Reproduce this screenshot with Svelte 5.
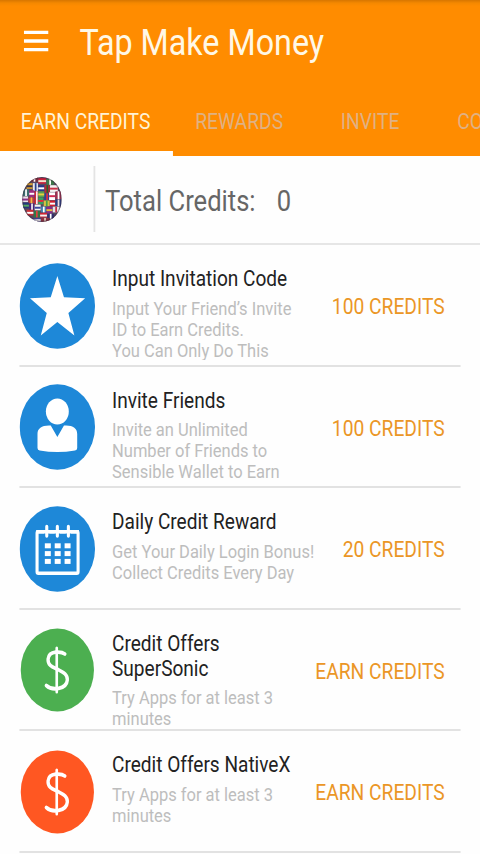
<script>
	/**
	 * @typedef {{title:string,text:string[],action:string,icon:string,color:string}} offer
	 */

	const tabs = [
		{ label: 'EARN CREDITS', width: 196 },
		{ label: 'REWARDS', width: 152 },
		{ label: 'INVITE', width: 145 },
		{ label: 'CONTACT', width: 150 }
	];
	let activeTab = $state(0);
	let credits = $state(0);

	/** @type {offer[]} */
	const offers = [
		{
			title: 'Input Invitation Code',
			text: ['Input Your Friend’s Invite', 'ID to Earn Credits.', 'You Can Only Do This'],
			action: '100 CREDITS',
			icon: 'star',
			color: '#1e88d8'
		},
		{
			title: 'Invite Friends',
			text: ['Invite an Unlimited', 'Number of Friends to', 'Sensible Wallet to Earn'],
			action: '100 CREDITS',
			icon: 'person',
			color: '#1e88d8'
		},
		{
			title: 'Daily Credit Reward',
			text: ['Get Your Daily Login Bonus!', 'Collect Credits Every Day'],
			action: '20 CREDITS',
			icon: 'calendar',
			color: '#1e88d8'
		},
		{
			title: 'Credit Offers SuperSonic',
			text: ['Try Apps for at least 3', 'minutes'],
			action: 'EARN CREDITS',
			icon: 'dollar',
			color: '#4caf50'
		},
		{
			title: 'Credit Offers NativeX',
			text: ['Try Apps for at least 3', 'minutes'],
			action: 'EARN CREDITS',
			icon: 'dollar',
			color: '#ff5722'
		}
	];

	// flag patches on the globe: x, y, width, height, base colour, stripe colour
	const flags = [
		[10, 0, 8, 5, '#7b2d3c', '#fff'],
		[18, 1, 9, 6, '#c8203c', '#f2e6d0'],
		[27, 2, 9, 6, '#3c7a4a', '#fff'],
		[5, 6, 7, 6, '#d8a030', '#303050'],
		[12, 6, 6, 8, '#e8e8f0', '#28408c'],
		[18, 8, 7, 6, '#28388c', '#fff'],
		[25, 8, 6, 8, '#b82838', '#28602c'],
		[31, 8, 9, 7, '#f4f4f4', '#c83048'],
		[1, 12, 7, 7, '#3c6e70', '#fff'],
		[8, 13, 6, 7, '#9c2c80', '#fff'],
		[14, 14, 4, 13, '#d42030', '#f4f0f0'],
		[18, 14, 7, 6, '#58a050', '#e8d040'],
		[25, 16, 5, 7, '#28409c', '#e03038'],
		[30, 15, 7, 8, '#fff', '#d02850'],
		[37, 14, 7, 8, '#a03050', '#fff'],
		[0, 19, 7, 6, '#e8e0e8', '#8a3088'],
		[7, 20, 7, 6, '#c03844', '#f0c040'],
		[18, 20, 6, 7, '#38a060', '#e82838'],
		[24, 23, 7, 6, '#d8c040', '#48a048'],
		[31, 23, 6, 6, '#d02030', '#fff'],
		[37, 22, 7, 7, '#2c3c80', '#f0e0e0'],
		[1, 25, 7, 6, '#24387c', '#58a860'],
		[8, 26, 6, 7, '#48207c', '#f0f0f0'],
		[14, 27, 7, 6, '#f4f4f0', '#3c48a0'],
		[21, 29, 6, 6, '#4080b0', '#fff'],
		[27, 29, 7, 7, '#842c8c', '#e8b840'],
		[34, 29, 8, 6, '#e4e4e8', '#c02840'],
		[5, 32, 8, 6, '#c83038', '#fff'],
		[13, 33, 7, 7, '#307844', '#e04040'],
		[20, 35, 8, 5, '#d02434', '#f4f4f4'],
		[28, 36, 8, 6, '#303070', '#fff'],
		[12, 40, 9, 4, '#404090', '#fff'],
		[21, 40, 10, 4, '#8c3040', '#e0d0c0']
	];
</script>

{#snippet badge(icon, color)}
	<svg class="badge" viewBox="0 0 86 86">
		<circle cx="43" cy="43" r={icon === 'dollar' ? 41.5 : 42.7} fill={color} />
		{#if icon === 'star'}
			<path
				d="M43 13 L50.5 34.3 L74.5 35.3 L55.5 50 L62.3 72.5 L43 59 L24.2 72.5 L31 50 L12 35.3 L35.5 34.3Z"
				fill="#fff"
			/>
		{:else if icon === 'person'}
			<g fill="#fff">
				<circle cx="43" cy="27.5" r="13" />
				<path
					d="M33.5 41.5 H35.5 L43 53 L50.5 41.5 H53 C61 41.5 65.5 44.5 65.5 50 V64 Q65.5 66 63 66.5 Q43 69.5 23 66.5 Q20.5 66 20.5 64 V50 C20.5 44.5 25 41.5 33.5 41.5Z"
				/>
			</g>
		{:else if icon === 'calendar'}
			<g fill="none" stroke="#fff" stroke-width="3.5">
				<rect x="20" y="25.8" width="46.5" height="41.5" rx="1.5" />
				<path d="M31 18.5 V31 M43 18.5 V31 M55.5 18.5 V31" stroke="#1e88d8" stroke-width="6" />
				<path d="M19 25.8 H67.5" />
				<path d="M31 20.5 V30 M43 20.5 V30 M55.5 20.5 V30" stroke-linecap="round" />
			</g>
			{#each [0, 1, 2] as row}
				{#each [0, 1, 2] as col}
					<rect x={28.8 + col * 11.2} y={37.3 + row * 7.8} width="6.8" height="5" fill="#fff" />
				{/each}
			{/each}
		{:else}
			<g fill="none" stroke="#fff" stroke-width="3.8" stroke-linecap="round">
				<path
					d="M51.5 27 C48 24.5 33.5 23 32.5 32 C31.8 39 39 40.5 43.5 42.5 C49 45 54.8 47 54.3 53 C53.4 62.5 37 64 30.5 58.5"
				/>
				<path d="M42.3 21 V65" stroke-width="3" />
			</g>
		{/if}
	</svg>
{/snippet}

<div class="screen">
	<header>
		<div class="toolbar">
			<svg class="menu" viewBox="0 0 28 22">
				<path d="M0 2.3 H28 M0 11 H28 M0 19.7 H28" stroke="#fff" stroke-width="3.3" />
			</svg>
			<h1>Tap Make Money</h1>
		</div>
		<nav>
			{#each tabs as tab, index}
				<button
					class:active={index === activeTab}
					style="width: {tab.width}px"
					onclick={() => (activeTab = index)}>{tab.label}</button
				>
			{/each}
		</nav>
	</header>

	<section class="total">
		<svg class="globe" viewBox="0 0 44 44">
			<clipPath id="globeClip"><circle cx="22" cy="22" r="22" /></clipPath>
			<g clip-path="url(#globeClip)">
				<rect width="44" height="44" fill="#584860" />
				{#each flags as [x, y, width, height, base, stripe], index}
					<rect {x} {y} width={width - 0.4} height={height - 0.4} fill={base} />
					{#if index % 2}
						<rect {x} y={y + height * 0.35} width={width - 0.4} height="1.9" fill={stripe} />
					{:else}
						<rect x={x + width * 0.35} {y} width="1.9" height={height - 0.4} fill={stripe} />
					{/if}
				{/each}
			</g>
			<circle cx="22" cy="22" r="21.3" fill="none" stroke="#382838" stroke-opacity="0.45" />
		</svg>
		<div class="balance">
			<span>Total Credits:</span>
			<span>{credits}</span>
		</div>
	</section>

	<ul>
		{#each offers as offer}
			<li>
				{@render badge(offer.icon, offer.color)}
				<div class="info">
					<h2>{offer.title}</h2>
					{#each offer.text as line}
						<p>{line}</p>
					{/each}
				</div>
				<span class="action">{offer.action}</span>
			</li>
		{/each}
	</ul>
</div>

<style>
	:global(body) {
		margin: 0;
		overflow: hidden;
		background: #fff;
	}
	/* the layout is 544 wide and is squeezed to the 480 wide display */
	.screen {
		width: 544px;
		height: 854px;
		overflow: hidden;
		transform: scaleX(0.88235);
		transform-origin: 0 0;
		background: #fefefe;
		font-family: Roboto, sans-serif;
	}
	h1,
	h2,
	p,
	ul {
		margin: 0;
		padding: 0;
		font-weight: 400;
	}
	header {
		height: 155.5px;
		background: linear-gradient(#d87600, #f48800 3px, #ff8c00 6px);
		overflow: hidden;
	}
	.toolbar {
		display: flex;
		align-items: center;
		height: 85px;
		padding-left: 27px;
	}
	.menu {
		width: 28px;
		height: 22px;
		margin-top: -3px;
	}
	h1 {
		margin-left: 35px;
		color: #fff8e6;
		font-size: 36.6px;
		line-height: 42px;
	}
	nav {
		display: flex;
		height: 70.5px;
	}
	button {
		flex-shrink: 0;
		padding: 8px 0 0;
		border: none;
		border-bottom: 5.5px solid transparent;
		background: none;
		color: #dfb183;
		font-family: inherit;
		font-size: 21.8px;
		text-indent: -2px;
	}
	button.active {
		color: #fff3d6;
		border-bottom-color: #fff;
	}
	.total {
		display: flex;
		align-items: center;
		height: 87.5px;
		padding-left: 25px;
		border-bottom: 2px solid #e6e6e6;
	}
	.globe {
		width: 45px;
		height: 45px;
	}
	.balance {
		display: flex;
		align-items: center;
		gap: 24px;
		height: 66px;
		margin-left: 36px;
		padding: 3px 0 0 11px;
		box-sizing: border-box;
		border-left: 2px solid #e4e4e4;
		color: #666;
		font-size: 29px;
	}
	ul {
		padding: 0 22px;
		list-style: none;
	}
	li {
		display: flex;
		align-items: flex-start;
		box-sizing: border-box;
		height: 121.5px;
		border-bottom: 2px solid #e2e2e2;
	}
	.badge {
		flex-shrink: 0;
		width: 86px;
		height: 86px;
		margin-top: 17.5px;
	}
	.info {
		width: 235px;
		height: 115px;
		box-sizing: border-box;
		margin-left: 19px;
		padding-top: 21px;
		overflow: hidden;
	}
	h2 {
		width: 210px;
		margin-bottom: 7.5px;
		color: #222;
		font-size: 21.6px;
		line-height: 25px;
	}
	p {
		color: #bdbdbd;
		font-size: 18.7px;
		line-height: 21px;
		white-space: nowrap;
	}
	.action {
		flex: 1;
		margin-left: -40px;
		padding: 49px 18px 0 0;
		color: #eb9626;
		font-size: 21.8px;
		line-height: 26px;
		text-align: right;
		white-space: nowrap;
	}
</style>
